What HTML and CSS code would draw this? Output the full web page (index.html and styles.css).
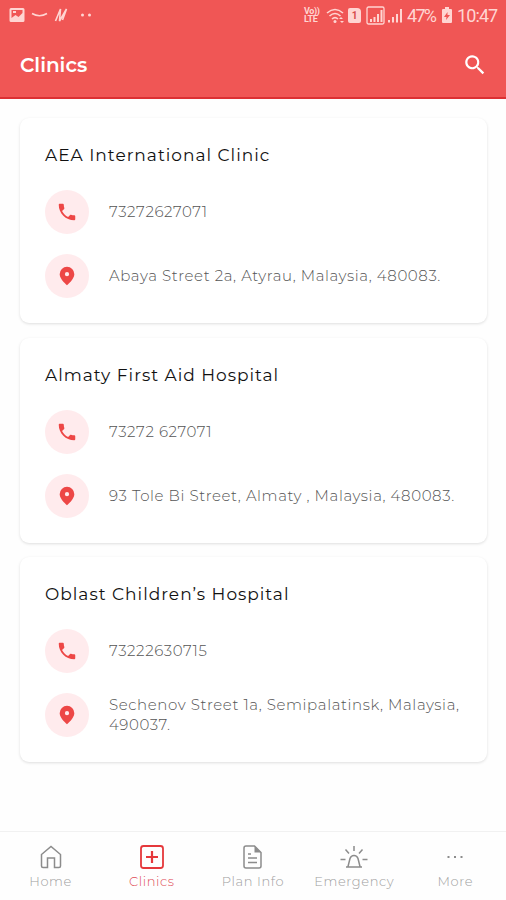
FILE: index.html
```html
<!DOCTYPE html>
<html lang="en">
<head>
<meta charset="utf-8">
<meta name="viewport" content="width=device-width, initial-scale=1">
<title>Clinics</title>
<link rel="stylesheet" href="styles.css">
</head>
<body>
<svg class="defs" width="0" height="0">
  <symbol id="phone" viewBox="0 0 24 24"><path d="M6.6 10.8c1.4 2.8 3.8 5.1 6.6 6.6l2.2-2.2c.3-.3.7-.4 1-.2 1.1.4 2.3.6 3.6.6.6 0 1 .4 1 1V20c0 .6-.4 1-1 1C10.600 21 3 13.400 3 4c0-.6.5-1 1-1h3.500c.6 0 1 .4 1 1 0 1.300.2 2.500.6 3.600.1.300 0 .7-.2 1z"/></symbol>
  <symbol id="pin" viewBox="0 0 24 24"><path fill-rule="evenodd" d="M12 2a8 8 0 0 0-8 8c0 5.500 8 12 8 12s8-6.500 8-12a8 8 0 0 0-8-8zm0 5.700a2.300 2.300 0 1 1 0 4.600 2.300 2.300 0 0 1 0-4.600z"/></symbol>
</svg>
<header class="top">
  <div class="status">
    <svg class="status-left" width="86" height="20" viewBox="0 0 86 20">
      <path fill-rule="evenodd" d="M3 1h11q1.500 0 1.500 1.500v11q0 1.500-1.500 1.500H2Q.5 15 .5 13.500v-11Q.5 1 2 1zM2.500 3v8l4-3 3 2 4-4V3zM4 4h3v2H4z"/>
      <path class="line" d="M23 6.500q7.500 4.500 15 0"/>
      <path class="line" d="M46.500 14l5-12-1 12 7-12-4 11"/>
      <circle cx="73.500" cy="8" r="1.500"/><circle cx="80.500" cy="8" r="1.500"/>
    </svg>
    <div class="status-right">
      <span class="volte"><span>Vo))</span><span>LTE</span></span>
      <svg class="wifi" width="20" height="18" viewBox="0 0 20 18"><path class="line" d="M1 6q8-7 16 0M3.500 9q5.500-5 11 0M6 12q3-2.700 6 0"/><circle cx="9" cy="14.500" r="1.500"/><path d="M13 12l2-2 2 2zM14 14h4l-2 2z"/></svg>
      <span class="sim">1</span>
      <svg class="signals" width="38" height="20" viewBox="0 0 38 20"><rect class="thin" x="1" y="1" width="17" height="17" rx="1.500"/><path d="M4 13h2v3H4zM7.500 11h2v5h-2zM11 8h2v8h-2zM14.500 4h2v12h-2zM22 14h2v2.500h-2zM26 11h2v5.500h-2zM30 8h2v8.500h-2zM34 3h2v13.500h-2z"/></svg>
      <span class="percent">47%</span>
      <svg class="battery" width="10" height="16" viewBox="0 0 10 16"><path fill-rule="evenodd" d="M3 0h4v2h2q1 0 1 1v12q0 1-1 1H1q-1 0-1-1V3q0-1 1-1h2zM5.500 5L2 10h2.500L4 13l4-5H5.500z"/></svg>
      <span class="clock">10:47</span>
    </div>
  </div>
  <div class="bar">
    <h1>Clinics</h1>
    <svg class="search" width="26" height="26" viewBox="0 0 24 24"><path d="M15.500 14h-.8l-.3-.3A6.500 6.500 0 1 0 13.700 14.400l.3.3v.8l5 5 1.500-1.500zm-6 0a4.500 4.500 0 1 1 0-9 4.500 4.500 0 0 1 0 9z"/></svg>
  </div>
</header>
<main class="list">
  <article class="card">
    <h2 class="t1">AEA International Clinic</h2>
    <div class="row"><span class="dot"><svg><use href="#phone"/></svg></span><p class="num n1">73272627071</p></div>
    <div class="row"><span class="dot"><svg><use href="#pin"/></svg></span><p class="a1">Abaya Street 2a, Atyrau, Malaysia, 480083.</p></div>
  </article>
  <article class="card">
    <h2 class="t2">Almaty First Aid Hospital</h2>
    <div class="row"><span class="dot"><svg><use href="#phone"/></svg></span><p class="num n2">73272 627071</p></div>
    <div class="row"><span class="dot"><svg><use href="#pin"/></svg></span><p class="a2">93 Tole Bi Street, Almaty , Malaysia, 480083.</p></div>
  </article>
  <article class="card">
    <h2 class="t3">Oblast Children’s Hospital</h2>
    <div class="row"><span class="dot"><svg><use href="#phone"/></svg></span><p class="num n3">73222630715</p></div>
    <div class="row"><span class="dot"><svg><use href="#pin"/></svg></span><p class="a3">Sechenov Street 1a, Semipalatinsk, Malaysia,<br>490037.</p></div>
  </article>
</main>
<nav class="tabs">
  <a class="tab"><svg width="28" height="26" viewBox="0 0 28 26"><path d="M4.500 10.500L14 2.500l9.500 8V22q0 1.500-1.500 1.500h-4.500V14h-7v9.500H6q-1.500 0-1.500-1.500z"/></svg><span>Home</span></a>
  <a class="tab active"><svg width="28" height="26" viewBox="0 0 28 26"><rect x="3" y="2" width="22" height="22" rx="2.500"/><path class="plus" d="M14 7v12M8 13h12"/></svg><span>Clinics</span></a>
  <a class="tab"><svg width="28" height="26" viewBox="0 0 28 26"><path d="M15.500 2H7q-2 0-2 2v18q0 2 2 2h13q2 0 2-2V8.500zM9 14h9M9 18.500h9M9 10h3"/><path class="fill" d="M15.500 2v6.500H22z"/></svg><span>Plan Info</span></a>
  <a class="tab"><svg width="28" height="26" viewBox="0 0 28 26"><path d="M8 22.500l2-8q1-3 4-3t4 3l2 8M6 23h16M14 2v5M5.500 5.500l3.500 4M22.500 5.500l-3.500 4M.5 15.500h5M22.500 15.500h5"/></svg><span>Emergency</span></a>
  <a class="tab"><svg width="28" height="26" viewBox="0 0 28 26"><path class="fill dots" d="M6.500 12h2v2h-2zM13 12h2v2h-2zM19.500 12h2v2h-2z"/></svg><span>More</span></a>
</nav>
</body>
</html>
```
FILE: styles.css
```css
* { box-sizing: border-box; }
body {
  margin: 0;
  width: 506px;
  height: 900px;
  display: flex;
  flex-direction: column;
  overflow: hidden;
  background: #fefefe;
  font-family: Montserrat, Inter, "Liberation Sans", sans-serif;
}
h1, h2, p { margin: 0; white-space: nowrap; }
svg { display: block; flex: none; }
.defs { position: absolute; }

.top {
  height: 99px;
  background: #f05655;
  border-bottom: 2px solid #dc3033;
  color: #fff;
}
.status {
  height: 32px;
  display: flex;
  justify-content: space-between;
  padding: 7px 9px 0;
  color: #ffd5d2;
  fill: #ffd5d2;
  font-family: Roboto, sans-serif;
}
.line, .thin { fill: none; stroke: #ffd5d2; stroke-width: 1.6; }
.thin { stroke-width: 1.3; }
.status-right { display: flex; align-items: flex-start; height: 20px; }
.volte {
  display: flex;
  flex-direction: column;
  width: 17px;
  margin-right: 5px;
  font-size: 9px;
  line-height: 8px;
  font-weight: 700;
  letter-spacing: -0.4px;
}
.wifi { margin-right: 1px; }
.sim {
  width: 13px;
  height: 15px;
  margin: 1px 5px 0 1px;
  border-radius: 2px 4px 2px 2px;
  background: #ffd5d2;
  color: #d64d4d;
  font-size: 10px;
  line-height: 15px;
  font-weight: 700;
  text-align: center;
}
.signals { margin-right: 3px; margin-top: -1px; }
.percent, .clock { font-size: 18px; line-height: 18px; white-space: nowrap; }
.percent { width: 35px; letter-spacing: -1.7px; }
.battery { margin-right: 5px; }
.clock { width: 40px; letter-spacing: -0.9px; }

.bar {
  height: 65px;
  display: flex;
  align-items: center;
  justify-content: space-between;
  padding: 0 18px 0 20px;
}
h1 { font-size: 20px; line-height: 26px; font-weight: 600; letter-spacing: 0; }
.search { fill: #fff; }

.list {
  flex: 1;
  display: flex;
  flex-direction: column;
  gap: 14.5px;
  padding: 19px 19px 0 20px;
}
.card {
  height: 205px;
  display: flex;
  flex-direction: column;
  gap: 20px;
  padding: 25px;
  border-radius: 9px;
  background: #fff;
  box-shadow: 0 1px 3px rgba(0, 0, 0, 0.13);
}
.card h2 {
  margin-bottom: 3px;
  height: 24px;
  font-size: 17px;
  line-height: 25px;
  font-weight: 400;
  letter-spacing: 1px;
  color: #111;
}
.row {
  display: flex;
  align-items: center;
  gap: 20px;
  height: 44px;
  font-size: 15px;
  line-height: 20px;
  font-weight: 300;
  letter-spacing: 0.6px;
  color: #555;
}
.dot {
  flex: none;
  display: grid;
  place-items: center;
  width: 44px;
  height: 44px;
  border-radius: 50%;
  background: #ffebed;
}
.dot svg { width: 22px; height: 22px; fill: #ed4746; }

.tabs {
  height: 69px;
  display: grid;
  grid-template-columns: repeat(5, 1fr);
  border-top: 1px solid #f1f1f1;
}
.tab {
  display: flex;
  flex-direction: column;
  align-items: center;
  gap: 2px;
  padding-top: 12px;
  color: #a0a0a0;
  font-size: 13px;
  line-height: 18px;
  font-weight: 300;
  letter-spacing: 0.6px;
}
.tab svg { fill: none; stroke: #8c8c8c; stroke-width: 1.5; }
.tab .fill { fill: #8c8c8c; stroke: none; }
.active { color: #e04e5a; }
.active svg { stroke: #e5383b; stroke-width: 1.8; }
.active .plus { stroke-width: 2.2; }
```
